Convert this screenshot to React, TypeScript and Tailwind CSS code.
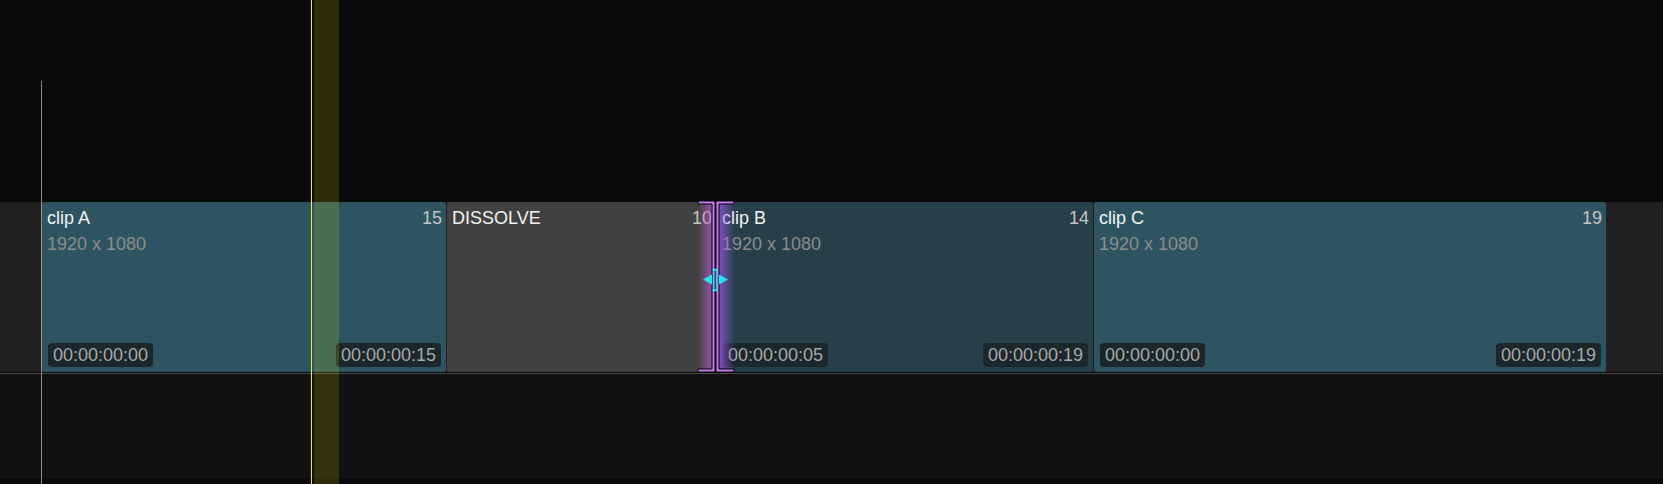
import React from "react";

type Clip = {
  name: string;
  dims?: string;
  count: string;
  width: string;
  bg: string;
  tcIn?: string;
  tcOut?: string;
};

const clips: Clip[] = [
  { name: "clip A", dims: "1920 x 1080", count: "15", width: "w-[404px]", bg: "bg-[#2f5461]", tcIn: "00:00:00:00", tcOut: "00:00:00:15" },
  { name: "DISSOLVE", count: "10", width: "w-[269px]", bg: "bg-[#414141]" },
  { name: "clip B", dims: "1920 x 1080", count: "14", width: "w-[376px]", bg: "bg-[#263f49]", tcIn: "00:00:00:05", tcOut: "00:00:00:19" },
  { name: "clip C", dims: "1920 x 1080", count: "19", width: "w-[512px]", bg: "bg-[#2f5461]", tcIn: "00:00:00:00", tcOut: "00:00:00:19" },
];

function Timecode({ value }: { value: string }) {
  return (
    <span className="rounded-[4px] bg-[#1c272b] px-[5px] py-[3px] text-[18px] leading-none text-[#a8a8a8]">
      {value}
    </span>
  );
}

function ClipBlock({ clip }: { clip: Clip }) {
  return (
    <div className={`${clip.width} ${clip.bg} flex shrink-0 flex-col rounded-[3px] px-[5px] pt-[7px] pb-[5px]`}>
      <div className="flex items-start justify-between text-[18px] leading-none">
        <span className="text-[#f2f2f2]">{clip.name}</span>
        <span className="-mr-px text-[#c4c4c4]">{clip.count}</span>
      </div>
      {clip.dims && (
        <div className="mt-2 text-[18px] leading-none text-[#8c8c8c]">{clip.dims}</div>
      )}
      {clip.tcIn && (
        <div className="mt-auto flex justify-between pl-px">
          <Timecode value={clip.tcIn} />
          <Timecode value={clip.tcOut!} />
        </div>
      )}
    </div>
  );
}

function TrimHandle() {
  return (
    <div className="absolute left-[696px] top-[200px] h-[174px] w-[40px]">
      {/* glow */}
      <div className="absolute left-[2px] top-[2px] h-[170px] w-[16px] bg-linear-to-r from-transparent to-[#c060e0]/75" />
      <div className="absolute left-[22px] top-[2px] h-[170px] w-[17px] bg-linear-to-l from-transparent to-[#a058f0]/75" />
      <svg className="absolute inset-0" width="40" height="174" viewBox="0 0 40 174">
        <polygon
          points="2,1 19,1 19,172 2,172 2,169 16,169 16,4 2,4"
          fill="#c47ff2"
          stroke="#000"
          strokeWidth="1"
        />
        <polygon
          points="20,1 38,1 38,4 23,4 23,169 38,169 38,172 20,172"
          fill="#c47ff2"
          stroke="#000"
          strokeWidth="1"
        />
        {/* slip cursor */}
        <polygon points="7,79.5 16,74.5 16,84.5" fill="#22e6f2" />
        <polygon points="32,79.5 23,74.5 23,84.5" fill="#22e6f2" />
        <rect x="17.8" y="70" width="2.4" height="20" fill="none" stroke="#22e6f2" strokeWidth="1.2" />
        <line x1="16.5" y1="69.5" x2="21.5" y2="69.5" stroke="#22e6f2" strokeWidth="1.5" />
        <line x1="16.5" y1="90.5" x2="21.5" y2="90.5" stroke="#22e6f2" strokeWidth="1.5" />
      </svg>
    </div>
  );
}

export default function App() {
  return (
    <div
      className="relative h-[484px] w-full overflow-hidden bg-[#0a0a0a]"
      style={{ fontFamily: '"Liberation Sans", Arial, sans-serif' }}
    >
      <div className="h-[202px]" />

      {/* video track */}
      <div className="flex h-[170px] gap-px bg-[#212121] pl-[42px]">
        {clips.map((c) => (
          <ClipBlock key={c.name} clip={c} />
        ))}
      </div>
      <div className="h-px bg-[#0a0a0a]" />
      <div className="h-px bg-[#4a4a4a]" />
      <div className="h-[105px] bg-[#111111]" />

      {/* timeline start marker */}
      <div className="absolute left-[41px] top-[81px] bottom-0 w-px bg-[#8c8c8c]" />

      {/* playhead */}
      <div className="absolute left-[314px] top-0 bottom-0 w-[25px] bg-[#ffff00]/[0.14]" />
      <div className="absolute left-[311px] top-0 bottom-0 w-px bg-[#f4f400]" />

      <TrimHandle />
    </div>
  );
}
